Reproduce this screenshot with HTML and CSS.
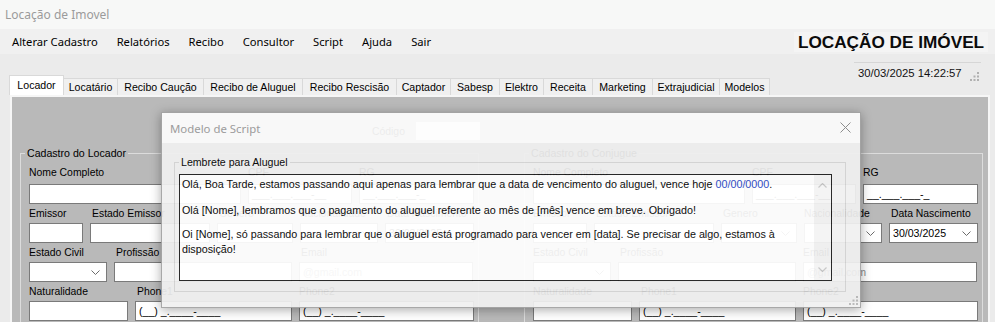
FILE: index.html
```html
<!DOCTYPE html>
<html lang="pt-BR">
<head>
<meta charset="utf-8">
<title>Locação de Imovel</title>
<link rel="stylesheet" href="styles.css">
</head>
<body>
<div class="titlebar">Locação de Imovel</div>
<div class="menubar">
  <nav class="menu">
    <span class="mi">Alterar Cadastro</span>
    <span class="mi">Relatórios</span>
    <span class="mi">Recibo</span>
    <span class="mi">Consultor</span>
    <span class="mi">Script</span>
    <span class="mi">Ajuda</span>
    <span class="mi">Sair</span>
  </nav>
  <div class="brand">LOCAÇÃO DE IMÓVEL</div>
</div>
<div class="tabhead">
  <div class="tabs">
    <div class="tab sel">Locador</div>
    <div class="tab">Locatário</div>
    <div class="tab">Recibo Caução</div>
    <div class="tab">Recibo de Aluguel</div>
    <div class="tab">Recibo Rescisão</div>
    <div class="tab">Captador</div>
    <div class="tab">Sabesp</div>
    <div class="tab">Elektro</div>
    <div class="tab">Receita</div>
    <div class="tab">Marketing</div>
    <div class="tab">Extrajudicial</div>
    <div class="tab">Modelos</div>
  </div>
  <div class="status">
    <div class="sep"></div>
    <div class="clockrow">
      <span class="clock">30/03/2025 14:22:57</span>
      <svg class="grip" width="9" height="9" viewBox="0 0 9 9"><g fill="#b0b0b0"><rect x="7" y="0" width="2" height="2"/><rect x="7" y="3.5" width="2" height="2"/><rect x="3.5" y="3.5" width="2" height="2"/><rect x="7" y="7" width="2" height="2"/><rect x="3.5" y="7" width="2" height="2"/><rect x="0" y="7" width="2" height="2"/></g></svg>
    </div>
  </div>
</div>

<div class="panel">
  <div class="coderow">
    <span class="codelabel">Código</span>
    <div class="input code"></div>
  </div>
  <div class="groups">
    <fieldset class="group">
      <legend>Cadastro do Locador</legend>
      <div class="rows">
        <div class="row first">
          <div class="field w212"><span class="lbl">Nome Completo</span><div class="input"></div></div>
          <div class="field w104"><span class="lbl">CPF</span><div class="input">___.___.___-__</div></div>
          <div class="field w115"><span class="lbl">RG</span><div class="input">__.___.___-_</div></div>
        </div>
        <div class="row">
          <div class="field w54"><span class="lbl">Emissor</span><div class="input"></div></div>
          <div class="field w120"><span class="lbl ind">Estado Emissor</span><div class="input"></div></div>
          <div class="field w76"><span class="lbl ind">Genero</span><div class="input combo"><span></span><svg class="chev" width="9" height="5" viewBox="0 0 9 5"><path d="M0.5 0.5L4.5 4.5L8.5 0.5" fill="none" stroke="#6b6b6b"/></svg></div></div>
          <div class="field w78"><span class="lbl">Nacionalidade</span><div class="input combo"><span></span><svg class="chev" width="9" height="5" viewBox="0 0 9 5"><path d="M0.5 0.5L4.5 4.5L8.5 0.5" fill="none" stroke="#6b6b6b"/></svg></div></div>
          <div class="field w89"><span class="lbl ind">Data Nascimento</span><div class="input combo"><span>30/03/2025</span><svg class="chev" width="9" height="5" viewBox="0 0 9 5"><path d="M0.5 0.5L4.5 4.5L8.5 0.5" fill="none" stroke="#6b6b6b"/></svg></div></div>
        </div>
        <div class="row">
          <div class="field w78"><span class="lbl">Estado Civil</span><div class="input combo"><span></span><svg class="chev" width="9" height="5" viewBox="0 0 9 5"><path d="M0.5 0.5L4.5 4.5L8.5 0.5" fill="none" stroke="#6b6b6b"/></svg></div></div>
          <div class="field w178"><span class="lbl ind">Profissão</span><div class="input"></div></div>
          <div class="field w174"><span class="lbl ind">Email</span><div class="input hint">@gmail.com</div></div>
        </div>
        <div class="row">
          <div class="field w99"><span class="lbl">Naturalidade</span><div class="input"></div></div>
          <div class="field w157"><span class="lbl ind">Phone1</span><div class="input">(__) _.____-____</div></div>
          <div class="field w175"><span class="lbl">Phone2</span><div class="input">(__) _.____-____</div></div>
        </div>
      </div>
    </fieldset>

    <fieldset class="group">
      <legend>Cadastro do Conjugue</legend>
      <div class="rows">
        <div class="row first">
          <div class="field w212"><span class="lbl">Nome Completo</span><div class="input"></div></div>
          <div class="field w104"><span class="lbl">CPF</span><div class="input">___.___.___-__</div></div>
          <div class="field w115"><span class="lbl">RG</span><div class="input">__.___.___-_</div></div>
        </div>
        <div class="row">
          <div class="field w54"><span class="lbl">Emissor</span><div class="input"></div></div>
          <div class="field w120"><span class="lbl ind">Estado Emissor</span><div class="input"></div></div>
          <div class="field w76"><span class="lbl ind">Genero</span><div class="input combo"><span></span><svg class="chev" width="9" height="5" viewBox="0 0 9 5"><path d="M0.5 0.5L4.5 4.5L8.5 0.5" fill="none" stroke="#6b6b6b"/></svg></div></div>
          <div class="field w78"><span class="lbl">Nacionalidade</span><div class="input combo"><span></span><svg class="chev" width="9" height="5" viewBox="0 0 9 5"><path d="M0.5 0.5L4.5 4.5L8.5 0.5" fill="none" stroke="#6b6b6b"/></svg></div></div>
          <div class="field w89"><span class="lbl ind">Data Nascimento</span><div class="input combo"><span>30/03/2025</span><svg class="chev" width="9" height="5" viewBox="0 0 9 5"><path d="M0.5 0.5L4.5 4.5L8.5 0.5" fill="none" stroke="#6b6b6b"/></svg></div></div>
        </div>
        <div class="row">
          <div class="field w78"><span class="lbl">Estado Civil</span><div class="input combo"><span></span><svg class="chev" width="9" height="5" viewBox="0 0 9 5"><path d="M0.5 0.5L4.5 4.5L8.5 0.5" fill="none" stroke="#6b6b6b"/></svg></div></div>
          <div class="field w178"><span class="lbl ind">Profissão</span><div class="input"></div></div>
          <div class="field w174"><span class="lbl">Email</span><div class="input hint">@gmail.com</div></div>
        </div>
        <div class="row">
          <div class="field w99"><span class="lbl">Naturalidade</span><div class="input"></div></div>
          <div class="field w157"><span class="lbl ind">Phone1</span><div class="input">(__) _.____-____</div></div>
          <div class="field w175"><span class="lbl">Phone2</span><div class="input">(__) _.____-____</div></div>
        </div>
      </div>
    </fieldset>
  </div>
</div>

<div class="dialog">
  <div class="dlg-title">
    <span>Modelo de Script</span>
    <svg class="close" width="11" height="11" viewBox="0 0 11 11"><path d="M0.5 0.5L10.5 10.5M10.5 0.5L0.5 10.5" stroke="#8a8a8a" stroke-width="1" fill="none"/></svg>
  </div>
  <div class="dlg-body">
    <fieldset class="dgroup">
      <legend>Lembrete para Aluguel</legend>
      <div class="rtb">
        <div class="rtb-text">
          <p>Olá, Boa Tarde, estamos passando aqui apenas para lembrar que a data de vencimento do aluguel, vence hoje <span class="blue">00/00/0000</span>.</p>
          <p class="p2">Olá [Nome], lembramos que o pagamento do aluguel referente ao mês de [mês] vence em breve. Obrigado!</p>
          <p class="p3">Oi [Nome], só passando para lembrar que o aluguel está programado para vencer em [data]. Se precisar de algo, estamos à<br>disposição!</p>
        </div>
        <div class="vscroll">
          <svg width="9" height="5" viewBox="0 0 9 5"><path d="M0.5 4.5L4.5 0.5L8.5 4.5" fill="none" stroke="#c4c4c4" stroke-width="1.2"/></svg>
          <svg width="9" height="5" viewBox="0 0 9 5"><path d="M0.5 0.5L4.5 4.5L8.5 0.5" fill="none" stroke="#c4c4c4" stroke-width="1.2"/></svg>
        </div>
      </div>
    </fieldset>
    <svg class="dgrip" width="9" height="9" viewBox="0 0 9 9"><g fill="#b8b8b8"><rect x="7" y="0" width="2" height="2"/><rect x="7" y="3.5" width="2" height="2"/><rect x="3.5" y="3.5" width="2" height="2"/><rect x="7" y="7" width="2" height="2"/><rect x="3.5" y="7" width="2" height="2"/><rect x="0" y="7" width="2" height="2"/></g></svg>
  </div>
</div>
</body>
</html>
```

FILE: styles.css
```css
* { box-sizing: border-box; }

body {
  margin: 0;
  width: 995px;
  height: 322px;
  overflow: hidden;
  position: relative;
  background: #ebebeb;
  font-family: "Liberation Sans", Arial, sans-serif;
  font-size: 10.6px;
  color: #000;
}

.titlebar {
  height: 29px;
  background: #f7f8f7;
  color: #9b9b9b;
  font-family: "Noto Sans", sans-serif;
  font-size: 12px;
  line-height: 29px;
  padding-left: 5px;
}

.menubar {
  height: 25px;
  background: #f0f0f0;
  display: flex;
  align-items: center;
}

.menu {
  display: flex;
  padding-left: 2.5px;
}

.mi {
  padding: 0 9.5px;
  font-family: "Noto Sans", sans-serif;
  font-size: 11.2px;
  line-height: 25px;
  color: #000;
}

.brand {
  margin-left: auto;
  margin-right: 7px;
  height: 20px;
  width: 194px;
  background: #f4f4f4;
  font-family: "Liberation Sans", Arial, sans-serif;
  font-weight: bold;
  font-size: 17.2px;
  line-height: 20px;
  text-align: center;
  color: #0b0b0b;
}

.tabhead {
  height: 41px;
  display: flex;
  align-items: flex-end;
  padding-left: 9px;
}

.tabs {
  display: flex;
  align-items: flex-end;
}

.tab {
  height: 17px;
  border: 1px solid #d9d9d9;
  border-bottom: none;
  margin-left: -1px;
  background: #f0f0f0;
  text-align: center;
  line-height: 17px;
  white-space: nowrap;
}

.tab.sel {
  height: 20px;
  margin-left: 0;
  background: #ffffff;
  line-height: 18px;
  position: relative;
  z-index: 1;
}

.tab:nth-child(1) { width: 55px; }
.tab:nth-child(2) { width: 55px; }
.tab:nth-child(3) { width: 87px; }
.tab:nth-child(4) { width: 100px; }
.tab:nth-child(5) { width: 95px; }
.tab:nth-child(6) { width: 55px; }
.tab:nth-child(7) { width: 50px; }
.tab:nth-child(8) { width: 45px; }
.tab:nth-child(9) { width: 50px; }
.tab:nth-child(10) { width: 61px; }
.tab:nth-child(11) { width: 68px; }
.tab:nth-child(12) { width: 51px; }

.status {
  margin-left: auto;
  margin-right: 14px;
  width: 127px;
  align-self: flex-start;
  padding-top: 8px;
}

.sep {
  height: 1px;
  background: #d6d6d6;
}

.clockrow {
  display: flex;
  align-items: flex-start;
  height: 20px;
}

.clock {
  padding-left: 4px;
  font-size: 11.3px;
  line-height: 20px;
  color: #111;
}

.grip {
  margin-left: auto;
  margin-right: 2px;
  margin-top: 9px;
}

.panel {
  margin-left: 10px;
  width: 980px;
  height: 240px;
  border: 2px solid #f6f6f6;
  border-bottom: none;
  background: #b9b9b9;
}

.coderow {
  display: flex;
  align-items: center;
  margin-top: 25px;
  padding-left: 360px;
  height: 18px;
}

.codelabel {
  width: 44px;
  font-size: 10.4px;
}

.input {
  height: 20px;
  background: #ffffff;
  border: 1px solid #7a7a7a;
  padding-left: 3px;
  line-height: 18px;
  white-space: nowrap;
  overflow: hidden;
}

.input.code {
  width: 64px;
  height: 18px;
  border-color: #ffffff;
}

.input.hint { color: #8a8a8a; }

.input.combo {
  display: flex;
  align-items: center;
  justify-content: space-between;
  padding-right: 6px;
}

.chev { flex: none; }

.groups {
  display: flex;
  gap: 45px;
  padding-left: 8px;
  margin-top: 6px;
}

.group {
  width: 459px;
  margin: 0;
  min-width: 0;
  padding: 0 4px 8px 4px;
  border: 1px solid #dcdcdc;
}

.group legend {
  padding: 0 2px;
  line-height: 14px;
}

.rows {
  padding-left: 4px;
  margin-top: 4px;
  display: flex;
  flex-direction: column;
}

.row {
  display: flex;
  gap: 7px;
}

.field {
  display: flex;
  flex-direction: column;
}

.lbl {
  height: 19px;
  line-height: 19px;
  font-size: 10.4px;
  white-space: nowrap;
}

.row.first .lbl {
  height: 20px;
  line-height: 18px;
}

.lbl.ind { padding-left: 2px; }

.w54 { width: 54px; }
.w76 { width: 76px; }
.w78 { width: 78px; }
.w89 { width: 89px; }
.w99 { width: 99px; }
.w104 { width: 104px; }
.w115 { width: 115px; }
.w120 { width: 120px; }
.w157 { width: 157px; }
.w174 { width: 174px; }
.w175 { width: 175px; }
.w178 { width: 178px; }
.w212 { width: 212px; }

/* dialog */
.dialog {
  position: absolute;
  left: 161px;
  top: 112px;
  width: 700px;
  height: 196px;
  border: 1px solid #a2a2a2;
  opacity: 0.93;
  box-shadow: 0 2px 10px rgba(0, 0, 0, 0.35);
  display: flex;
  flex-direction: column;
}

.dlg-title {
  height: 30px;
  flex: none;
  background: #fdfdfd;
  display: flex;
  align-items: center;
  justify-content: space-between;
  padding: 0 9px 0 8px;
  font-family: "Noto Sans", sans-serif;
  font-size: 11.4px;
  color: #9a9a9a;
}

.close { margin-top: -2px; }

.dlg-body {
  flex: 1;
  background: #f0f0f0;
  padding: 12px 14px 0 12px;
  position: relative;
}

.dgroup {
  margin: 0;
  min-width: 0;
  padding: 0 13px 10px 4px;
  border: 1px solid #d5d5d5;
}

.dgroup legend {
  padding: 0 2px;
  line-height: 14px;
}

.rtb {
  margin-top: 5px;
  height: 107px;
  border: 1px solid #1c1c1c;
  background: #ffffff;
  display: flex;
}

.rtb-text {
  flex: 1;
  padding: 2px 0 0 2px;
  font-size: 10.75px;
  line-height: 15px;
}

.rtb-text p {
  margin: 0;
  white-space: nowrap;
}

.rtb-text .p2 { margin-top: 11px; }
.rtb-text .p3 { margin-top: 9px; }

.blue { color: #1f44c4; }

.vscroll {
  width: 17px;
  flex: none;
  background: #f4f4f4;
  display: flex;
  flex-direction: column;
  align-items: center;
  justify-content: space-between;
  padding: 8px 0 8px;
}

.dgrip {
  position: absolute;
  right: 2px;
  bottom: 2px;
}
```
